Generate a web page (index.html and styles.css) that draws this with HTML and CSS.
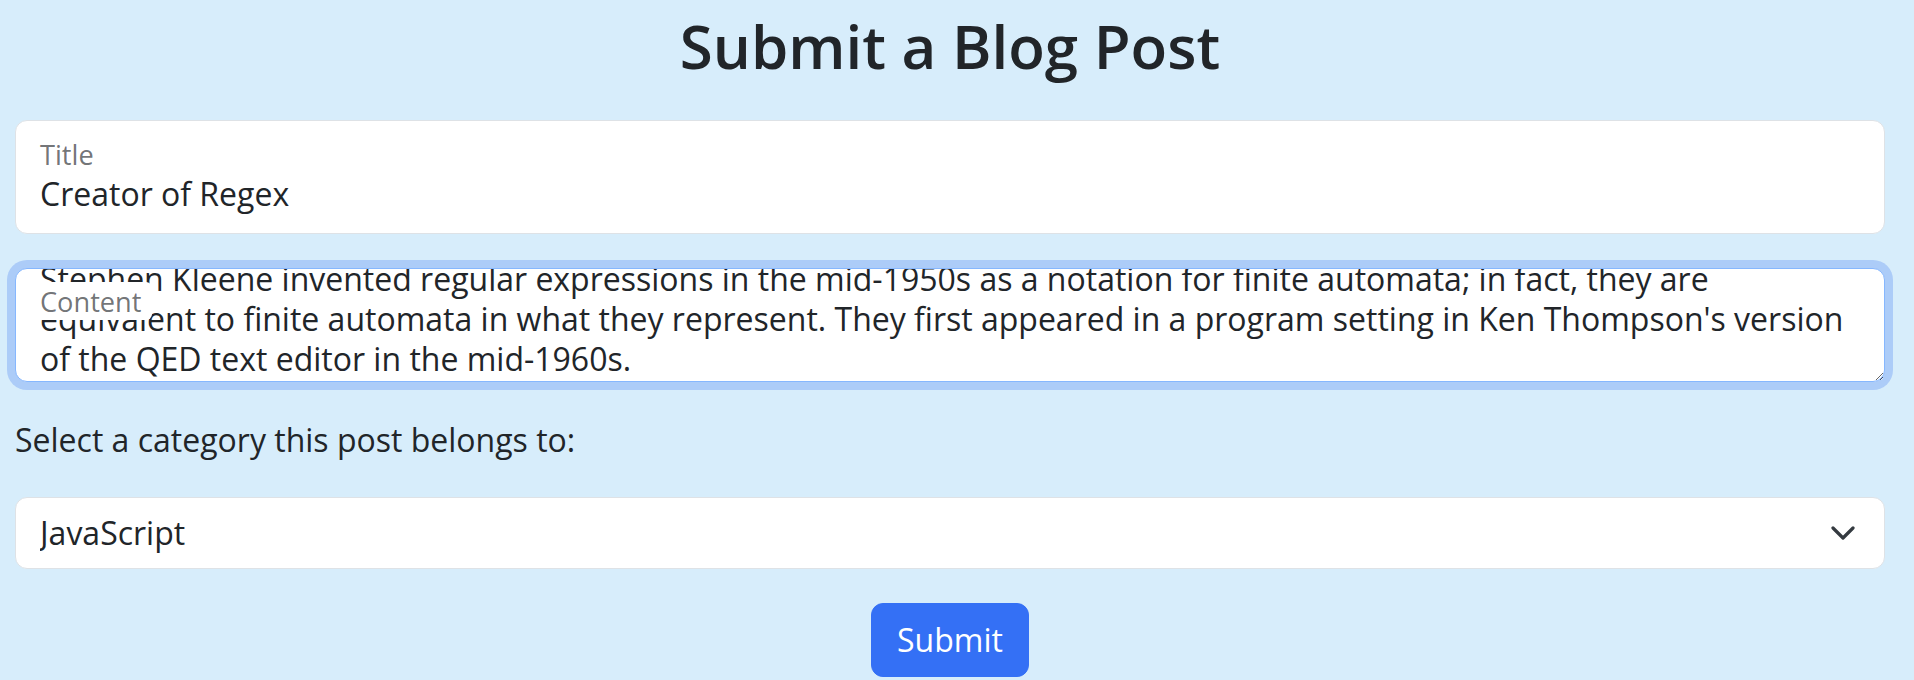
FILE: index.html
```html
<!DOCTYPE html>
<html lang="en">
<head>
<meta charset="utf-8">
<title>Submit a Blog Post</title>
<link rel="stylesheet" href="styles.css">
</head>
<body>
<main class="page">
  <h1 class="heading">Submit a Blog Post</h1>
  <form class="post-form">
    <div class="floating">
      <input class="control" type="text" value="Creator of Regex">
      <label class="float-label">Title</label>
    </div>
    <div class="floating">
      <textarea class="control area is-focused" id="content">Stephen Kleene invented regular expressions in the mid-1950s as a notation for finite automata; in fact, they are equivalent to finite automata in what they represent. They first appeared in a program setting in Ken Thompson's version of the QED text editor in the mid-1960s.</textarea>
      <label class="float-label banded">Content</label>
    </div>
    <label class="select-label">Select a category this post belongs to:</label>
    <div class="select-wrap">
      <select class="select">
        <option>JavaScript</option>
      </select>
      <svg class="chevron" width="24" height="14" viewBox="0 0 24 14" aria-hidden="true">
        <path d="M2 2l10 10 10-10" fill="none" stroke="#343a40" stroke-width="3.2" stroke-linecap="round" stroke-linejoin="round"/>
      </svg>
    </div>
    <div class="actions">
      <button class="btn" type="button">Submit</button>
    </div>
  </form>
</main>
<script src="script.js"></script>
</body>
</html>
```
FILE: styles.css
```css
* { box-sizing: border-box; }
html, body { margin: 0; padding: 0; }
body {
  background: #d7edfb;
  color: #212529;
  font-family: "Open Sans", "Noto Sans", sans-serif;
  font-size: 32px;
  line-height: 1.5;
  overflow: hidden;
}
.page {
  padding: 0 29px 0 15px;
}
.heading {
  margin: 10px 0 36px;
  text-align: center;
  font-size: 60px;
  font-weight: 600;
  line-height: 1.23;
}
.post-form {
  display: flex;
  flex-direction: column;
}
.floating {
  position: relative;
  margin-bottom: 34px;
}
.control {
  display: block;
  width: 100%;
  height: 114px;
  padding: 49px 24px 15px;
  font-family: inherit;
  font-size: 32px;
  line-height: 1.5;
  color: #212529;
  background: #fff;
  border: 1.5px solid #dee2e6;
  border-radius: 12px;
  outline: none;
}
.area {
  padding: 52px 24px 2px;
  line-height: 40px;
  resize: vertical;
  overflow: hidden;
}
.area.is-focused {
  border-color: #86b7fe;
  box-shadow: 0 0 0 8px #acccf8;
}
.float-label {
  position: absolute;
  top: 15px;
  left: 25px;
  font-size: 27.2px;
  line-height: 40px;
  color: rgba(33, 37, 41, 0.65);
  pointer-events: none;
}
.float-label.banded {
  top: 14px;
  left: 14px;
  padding: 0 11px;
  height: 38px;
  line-height: 40px;
  background: #fff;
  border-radius: 6px;
}
.select-label {
  display: block;
  margin-bottom: 33px;
}
.select-wrap {
  position: relative;
  margin-bottom: 34px;
}
.select {
  display: block;
  width: 100%;
  height: 72px;
  padding: 10px 24px;
  font-family: inherit;
  font-size: 32px;
  line-height: 1.5;
  color: #212529;
  background: #fff;
  border: 1.5px solid #dee2e6;
  border-radius: 12px;
  appearance: none;
  -webkit-appearance: none;
  outline: none;
}
.chevron {
  position: absolute;
  right: 30px;
  top: 29px;
  pointer-events: none;
}
.actions {
  display: flex;
  justify-content: center;
}
.btn {
  font-family: inherit;
  font-size: 32px;
  line-height: 1.5;
  color: #fff;
  background: #3470f5;
  border: 1.5px solid #3470f5;
  border-radius: 12px;
  padding: 12px 24px;
  width: 158px;
}
```
FILE: script.js
```js
var ta = document.getElementById('content');
ta.scrollTop = ta.scrollHeight;
```
